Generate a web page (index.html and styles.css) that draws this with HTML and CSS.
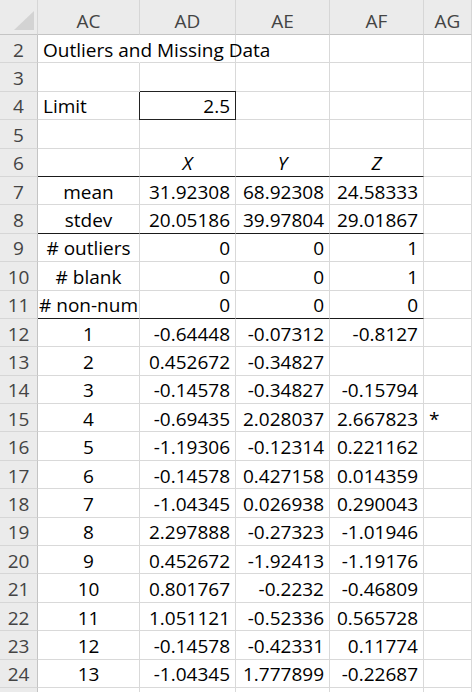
FILE: index.html
```html
<!DOCTYPE html>
<html>
<head>
<meta charset="utf-8">
<link rel="stylesheet" href="styles.css">
</head>
<body>
<div class="sheet">
  <div class="row head">
    <div class="c rh corner"><span class="tri"></span></div>
    <div class="c ch">AC</div><div class="c ch">AD</div><div class="c ch">AE</div><div class="c ch">AF</div><div class="c ch">AG</div>
  </div>
  <div class="row">
    <div class="c rh">2</div>
    <div class="c l over">Outliers and Missing Data</div><div class="c"></div><div class="c"></div><div class="c"></div><div class="c"></div>
  </div>
  <div class="row">
    <div class="c rh">3</div>
    <div class="c"></div><div class="c"></div><div class="c"></div><div class="c"></div><div class="c"></div>
  </div>
  <div class="row">
    <div class="c rh">4</div>
    <div class="c l">Limit</div><div class="c r boxed">2.5</div><div class="c"></div><div class="c"></div><div class="c"></div>
  </div>
  <div class="row">
    <div class="c rh">5</div>
    <div class="c"></div><div class="c"></div><div class="c"></div><div class="c"></div><div class="c"></div>
  </div>
  <div class="row">
    <div class="c rh">6</div>
    <div class="c line"></div><div class="c m i line">X</div><div class="c m i line">Y</div><div class="c m i line">Z</div><div class="c"></div>
  </div>
  <div class="row">
    <div class="c rh">7</div>
    <div class="c m">mean</div><div class="c r">31.92308</div><div class="c r">68.92308</div><div class="c r">24.58333</div><div class="c"></div>
  </div>
  <div class="row">
    <div class="c rh">8</div>
    <div class="c m line">stdev</div><div class="c r line">20.05186</div><div class="c r line">39.97804</div><div class="c r line">29.01867</div><div class="c"></div>
  </div>
  <div class="row">
    <div class="c rh">9</div>
    <div class="c m"># outliers</div><div class="c r">0</div><div class="c r">0</div><div class="c r">1</div><div class="c"></div>
  </div>
  <div class="row">
    <div class="c rh">10</div>
    <div class="c m"># blank</div><div class="c r">0</div><div class="c r">0</div><div class="c r">1</div><div class="c"></div>
  </div>
  <div class="row">
    <div class="c rh">11</div>
    <div class="c m line"># non-num</div><div class="c r line">0</div><div class="c r line">0</div><div class="c r line">0</div><div class="c"></div>
  </div>
  <div class="row">
    <div class="c rh">12</div>
    <div class="c m">1</div><div class="c r">-0.64448</div><div class="c r">-0.07312</div><div class="c r">-0.8127</div><div class="c"></div>
  </div>
  <div class="row">
    <div class="c rh">13</div>
    <div class="c m">2</div><div class="c r">0.452672</div><div class="c r">-0.34827</div><div class="c r"></div><div class="c"></div>
  </div>
  <div class="row">
    <div class="c rh">14</div>
    <div class="c m">3</div><div class="c r">-0.14578</div><div class="c r">-0.34827</div><div class="c r">-0.15794</div><div class="c"></div>
  </div>
  <div class="row">
    <div class="c rh">15</div>
    <div class="c m">4</div><div class="c r">-0.69435</div><div class="c r">2.028037</div><div class="c r">2.667823</div><div class="c l">*</div>
  </div>
  <div class="row">
    <div class="c rh">16</div>
    <div class="c m">5</div><div class="c r">-1.19306</div><div class="c r">-0.12314</div><div class="c r">0.221162</div><div class="c"></div>
  </div>
  <div class="row">
    <div class="c rh">17</div>
    <div class="c m">6</div><div class="c r">-0.14578</div><div class="c r">0.427158</div><div class="c r">0.014359</div><div class="c"></div>
  </div>
  <div class="row">
    <div class="c rh">18</div>
    <div class="c m">7</div><div class="c r">-1.04345</div><div class="c r">0.026938</div><div class="c r">0.290043</div><div class="c"></div>
  </div>
  <div class="row">
    <div class="c rh">19</div>
    <div class="c m">8</div><div class="c r">2.297888</div><div class="c r">-0.27323</div><div class="c r">-1.01946</div><div class="c"></div>
  </div>
  <div class="row">
    <div class="c rh">20</div>
    <div class="c m">9</div><div class="c r">0.452672</div><div class="c r">-1.92413</div><div class="c r">-1.19176</div><div class="c"></div>
  </div>
  <div class="row">
    <div class="c rh">21</div>
    <div class="c m">10</div><div class="c r">0.801767</div><div class="c r">-0.2232</div><div class="c r">-0.46809</div><div class="c"></div>
  </div>
  <div class="row">
    <div class="c rh">22</div>
    <div class="c m">11</div><div class="c r">1.051121</div><div class="c r">-0.52336</div><div class="c r">0.565728</div><div class="c"></div>
  </div>
  <div class="row">
    <div class="c rh">23</div>
    <div class="c m">12</div><div class="c r">-0.14578</div><div class="c r">-0.42331</div><div class="c r">0.11774</div><div class="c"></div>
  </div>
  <div class="row">
    <div class="c rh">24</div>
    <div class="c m">13</div><div class="c r">-1.04345</div><div class="c r">1.777899</div><div class="c r">-0.22687</div><div class="c"></div>
  </div>
  <div class="row">
    <div class="c rh"></div>
    <div class="c"></div><div class="c"></div><div class="c"></div><div class="c"></div><div class="c"></div>
  </div>
</div>
</body>
</html>
```

FILE: styles.css
```css
html, body {
  margin: 0;
  padding: 0;
  background: #ffffff;
}
body {
  width: 474px;
  height: 692px;
  overflow: hidden;
  font-family: "Open Sans", "Noto Sans", sans-serif;
  font-size: 19px;
  color: #000;
}
.sheet {
  display: flex;
  flex-direction: column;
}
.row {
  display: grid;
  grid-template-columns: 38px 102px 96px 94px 94px 48px;
  height: 28.4px;
}
.row.head {
  height: 35px;
}
.c {
  box-sizing: border-box;
  border-right: 1px solid #d9d9d9;
  border-bottom: 1px solid #d9d9d9;
  display: flex;
  align-items: center;
  padding: 3px 5px 0 5px;
  white-space: nowrap;
  line-height: 1;
  min-width: 0;
}
.head .c {
  background: #ebebeb;
  color: #444;
  justify-content: center;
  border-right: 1px solid #d6d6d6;
  border-bottom: 1px solid #c4c4c4;
  padding-top: 9px;
}
.rh {
  background: #ebebeb;
  color: #444;
  justify-content: center;
  border-right: 1px solid #c4c4c4;
  border-bottom: 1px solid #d6d6d6;
  padding: 3px 0 0 0;
}
.corner {
  position: relative;
}
.tri {
  position: absolute;
  right: 3px;
  bottom: 4px;
  width: 0;
  height: 0;
  border-left: 20px solid transparent;
  border-bottom: 19px solid #d3d3d3;
}
.l { justify-content: flex-start; }
.r { justify-content: flex-end; }
.m { justify-content: center; }
.i { font-style: italic; }
.over {
  overflow: visible;
  position: relative;
  z-index: 1;
  border-right-color: transparent;
}
.line {
  border-bottom: 1px solid #1a1a1a;
}
.boxed {
  border-right-color: #222;
  border-bottom-color: #222;
  box-shadow: -1px 0 0 #222, 0 -1px 0 #222;
}
```
